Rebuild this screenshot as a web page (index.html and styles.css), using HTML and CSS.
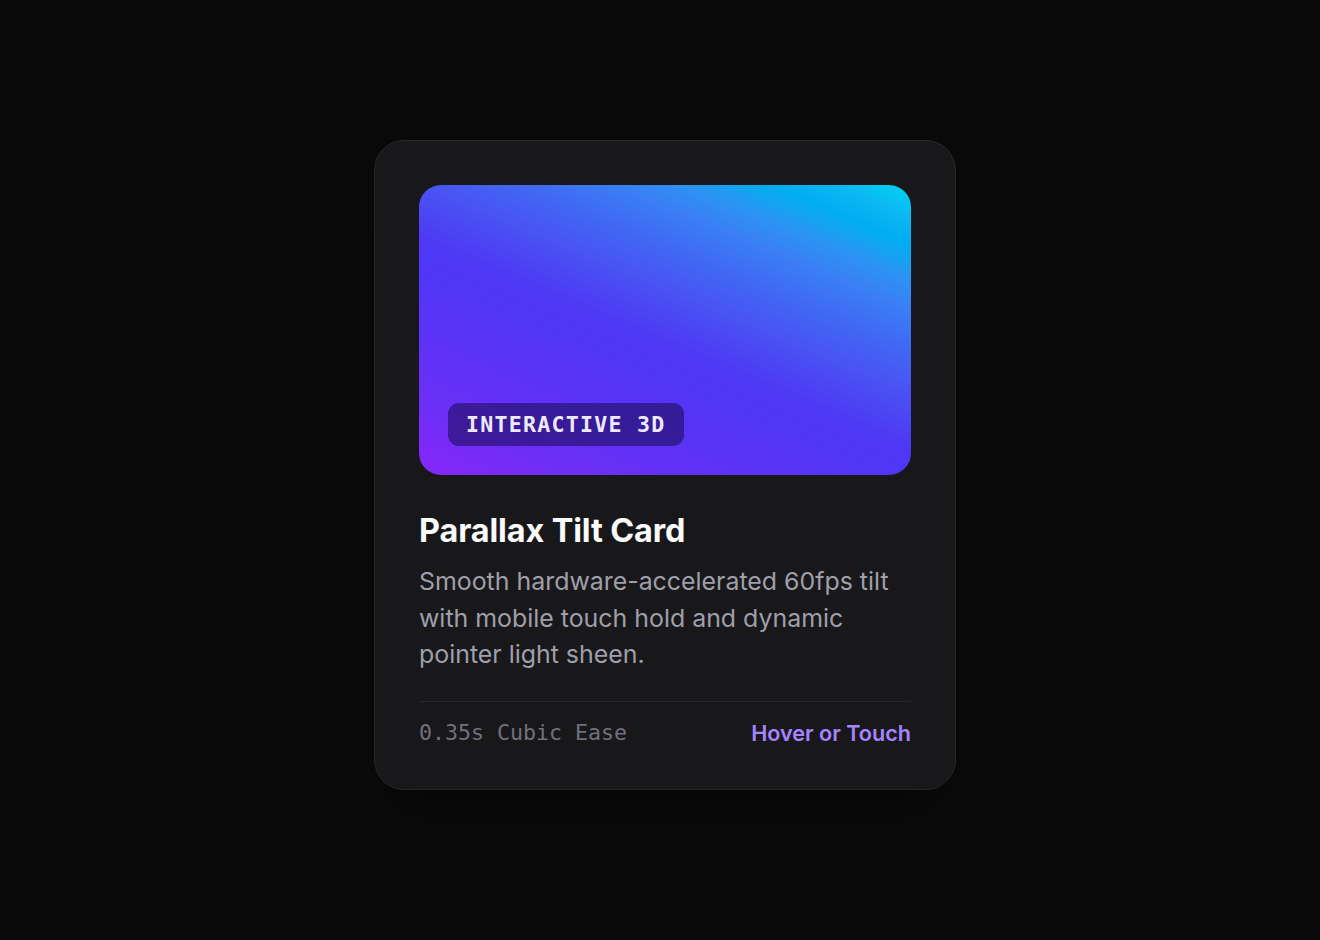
FILE: index.html
```html
<!DOCTYPE html>
<html lang="en">
<head>
<meta charset="utf-8">
<title>Parallax Tilt Card</title>
<link rel="stylesheet" href="styles.css">
</head>
<body>
<main class="stage">
  <article class="card">
    <div class="media">
      <span class="badge">INTERACTIVE 3D</span>
    </div>
    <h2 class="title">Parallax Tilt Card</h2>
    <p class="desc">Smooth hardware-accelerated 60fps tilt with mobile touch hold and dynamic pointer light sheen.</p>
    <footer class="meta">
      <span class="timing">0.35s Cubic Ease</span>
      <span class="hint">Hover or Touch</span>
    </footer>
  </article>
</main>
</body>
</html>
```

FILE: styles.css
```css
* { box-sizing: border-box; }
html, body { margin: 0; padding: 0; }
body {
  background: #0a0a0b;
  font-family: Inter, "Noto Sans", "Liberation Sans", sans-serif;
  color: #fafafa;
}
.stage {
  min-height: 940px;
  display: flex;
  align-items: center;
  justify-content: center;
  padding: 0 0 10px 10px;
}
.card {
  width: 582px;
  background: #18181b;
  border: 1px solid #27272a;
  border-radius: 30px;
  padding: 44px;
  box-shadow: 0 30px 60px -20px rgba(0, 0, 0, 0.45);
}
.media {
  position: relative;
  height: 290px;
  border-radius: 22px;
  background: linear-gradient(23deg,
    #8826fa 0%,
    #6a2ff7 16%,
    #5a33f6 30%,
    #5036f6 42%,
    #4e38f5 47%,
    #4c44f3 52%,
    #4a52f3 58%,
    #4266f4 66%,
    #3a7ff5 75%,
    #2c93f3 81%,
    #12a4f2 85%,
    #00adf2 88%,
    #0cb6f2 93%,
    #00d4f2 100%);
  overflow: hidden;
}
.badge {
  position: absolute;
  left: 29px;
  bottom: 29px;
  padding: 10px 18px 10px 18px;
  border-radius: 11px;
  background: rgba(28, 14, 90, 0.6);
  color: #ede9fe;
  font-family: "DejaVu Sans Mono", "Liberation Mono", monospace;
  font-weight: 700;
  font-size: 21.6px;
  line-height: 23px;
  letter-spacing: 1.25px;
}
.title {
  margin: 37px 0 0;
  font-size: 32.4px;
  line-height: 1.2;
  font-weight: 700;
  letter-spacing: -0.12px;
  color: #fafafa;
}
.desc {
  margin: 12px 0 0;
  font-size: 24.9px;
  line-height: 36.45px;
  color: #9f9fa9;
}
.meta {
  margin-top: 28.5px;
  padding-top: 18.5px;
  border-top: 1px solid #27272a;
  display: flex;
  justify-content: space-between;
  align-items: center;
  line-height: 24px;
}
.timing {
  font-family: "DejaVu Sans Mono", "Liberation Mono", monospace;
  font-size: 21.6px;
  color: #71717b;
}
.hint {
  font-size: 21.6px;
  font-weight: 600;
  color: #a684ff;
}
```
